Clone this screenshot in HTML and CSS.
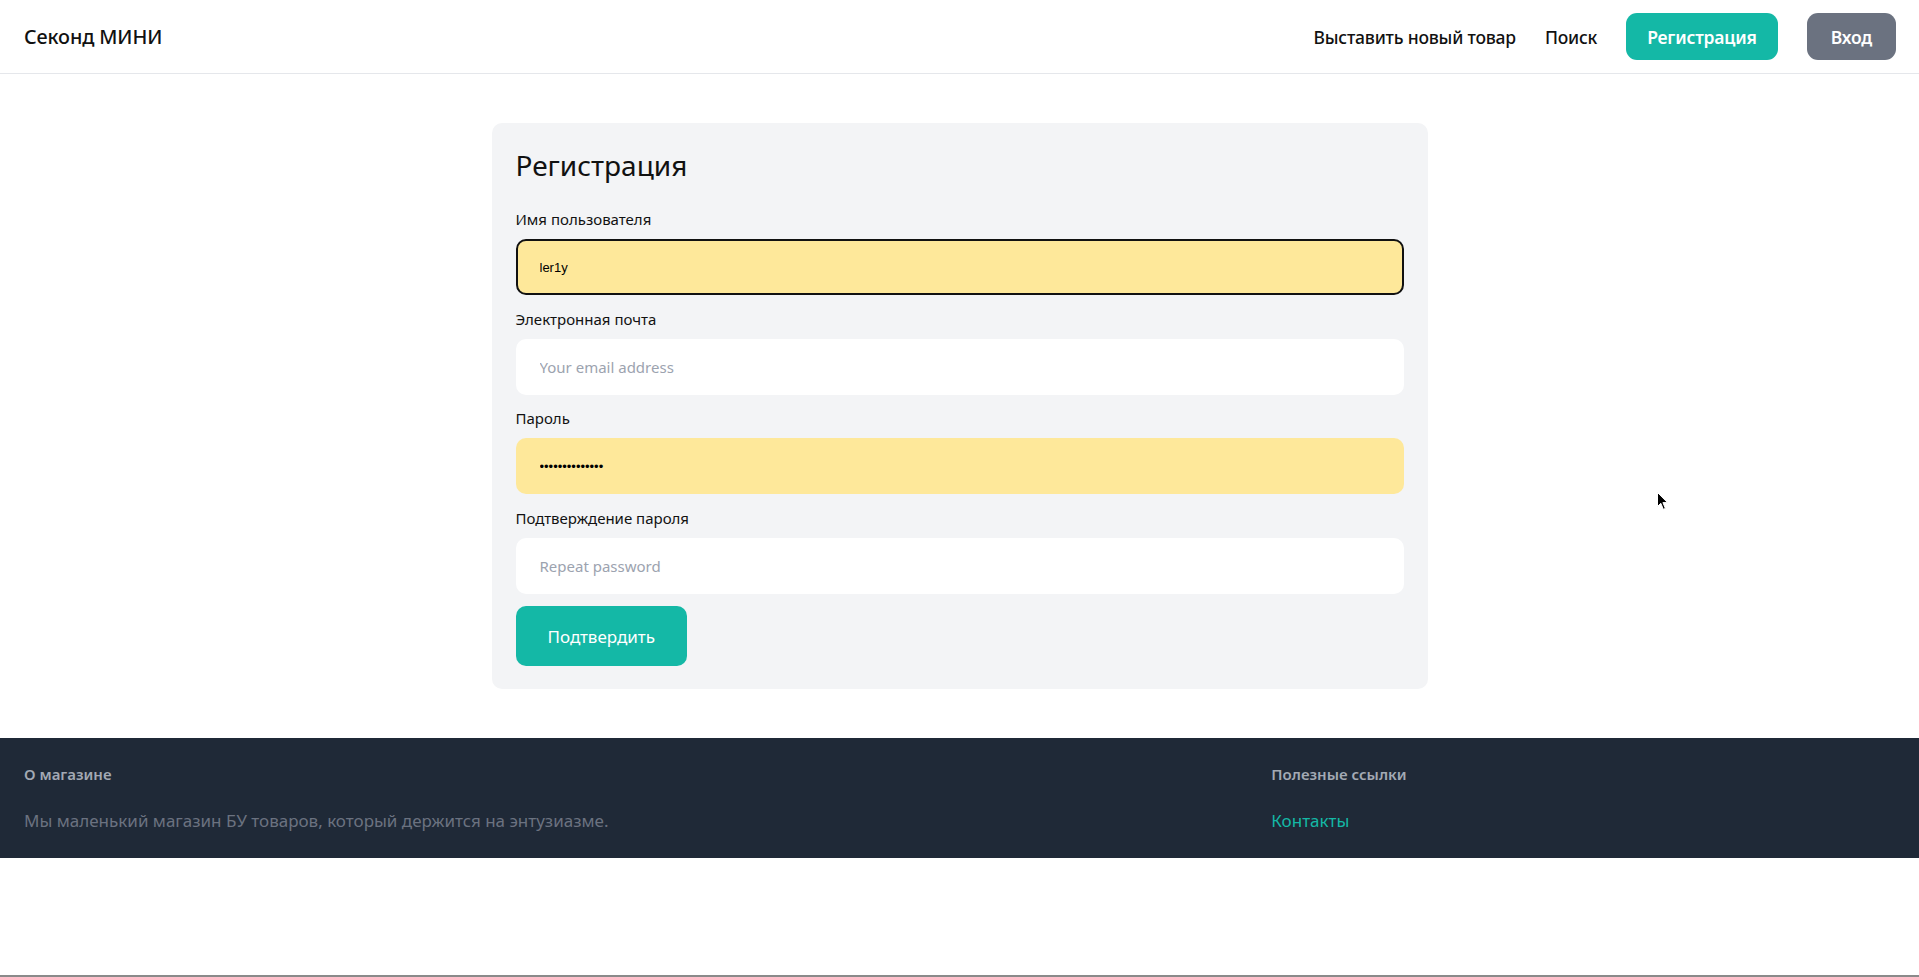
FILE: index.html
```html
<!DOCTYPE html>
<html lang="ru">
<head>
<meta charset="utf-8">
<title>Регистрация — Секонд МИНИ</title>
<link rel="stylesheet" href="styles.css">
</head>
<body>
<div class="page">
  <header class="navbar">
    <a class="brand" href="#">Секонд МИНИ</a>
    <nav class="nav">
      <a class="nav-link" href="#">Выставить новый товар</a>
      <a class="nav-link" href="#">Поиск</a>
      <a class="btn btn-teal" href="#">Регистрация</a>
      <a class="btn btn-gray" href="#">Вход</a>
    </nav>
  </header>

  <main class="main">
    <section class="card">
      <h1 class="card-title">Регистрация</h1>
      <form class="form">
        <div class="field">
          <label class="label" for="username">Имя пользователя</label>
          <input class="input input-autofill input-focus" id="username" type="text" value="ler1y">
        </div>
        <div class="field">
          <label class="label" for="email">Электронная почта</label>
          <input class="input" id="email" type="email" placeholder="Your email address">
        </div>
        <div class="field">
          <label class="label" for="password">Пароль</label>
          <input class="input input-autofill" id="password" type="password" value="11111111111111">
        </div>
        <div class="field">
          <label class="label" for="password2">Подтверждение пароля</label>
          <input class="input" id="password2" type="password" placeholder="Repeat password">
        </div>
        <button class="submit" type="button">Подтвердить</button>
      </form>
    </section>
  </main>

  <footer class="footer">
    <div class="footer-col">
      <h3 class="footer-title">О магазине</h3>
      <p class="footer-text">Мы маленький магазин БУ товаров, который держится на энтузиазме.</p>
    </div>
    <div class="footer-col">
      <h3 class="footer-title">Полезные ссылки</h3>
      <a class="footer-link" href="#">Контакты</a>
    </div>
  </footer>

  <svg class="cursor" width="12" height="19" viewBox="0 0 12 19" aria-hidden="true">
    <path d="M0.5 0.5 L0.5 14.5 L3.8 11.3 L6.3 17.3 L8.4 16.4 L5.9 10.6 L10.5 10.6 Z" fill="#000" stroke="#fff" stroke-width="1"/>
  </svg>
</div>
</body>
</html>
```

FILE: styles.css
```css
* {
  box-sizing: border-box;
}

html, body {
  margin: 0;
  padding: 0;
  background: #ffffff;
}

body {
  font-family: "Noto Sans", "Open Sans", "Liberation Sans", sans-serif;
  color: #111111;
}

a {
  text-decoration: none;
  color: inherit;
}

.page {
  position: relative;
  min-height: 100vh;
  border-bottom: 2px solid #8a8a8a;
  display: flex;
  flex-direction: column;
}

/* Navbar */
.navbar {
  height: 74px;
  border-bottom: 1px solid #e5e7eb;
  display: flex;
  align-items: center;
  justify-content: space-between;
  padding: 0 23px 0 24px;
}

.brand {
  font-size: 19.8px;
  font-weight: 500;
  color: #111111;
  letter-spacing: -0.1px;
}

.nav {
  display: flex;
  align-items: center;
  gap: 29px;
}

.nav-link {
  font-size: 17.5px;
  font-weight: 500;
  color: #111111;
  letter-spacing: -0.2px;
}

.btn {
  display: inline-flex;
  align-items: center;
  justify-content: center;
  height: 47px;
  padding: 0 21px;
  border-radius: 11px;
  color: #ffffff;
  font-size: 17.5px;
  font-weight: 600;
  letter-spacing: -0.2px;
}

.btn-teal {
  background: #14b8a6;
}

.btn-gray {
  background: #6b7280;
  padding: 0 24px;
}

/* Main card */
.main {
  padding: 49px 0 49px;
  display: flex;
  justify-content: center;
}

.card {
  width: 936px;
  background: #f3f4f6;
  border-radius: 10px;
  padding: 24px 24px 23px;
}

.card-title {
  margin: 0 0 24px;
  font-size: 28px;
  line-height: 36px;
  font-weight: 400;
  color: #111111;
}

.form {
  display: flex;
  flex-direction: column;
  gap: 12px;
}

.field {
  display: flex;
  flex-direction: column;
  gap: 8px;
}

.field:nth-child(n+2) {
  margin-top: -0.3px;
}

.label {
  font-size: 15px;
  line-height: 24px;
  color: #111111;
}

.input {
  display: block;
  width: 100%;
  height: 56px;
  border: 2px solid transparent;
  border-radius: 10px;
  background: #ffffff;
  padding: 0 22px;
  font-family: "Noto Sans", "Open Sans", sans-serif;
  font-size: 15px;
  color: #111111;
  outline: none;
}

.input::placeholder {
  color: #9ca3af;
}

.input-autofill {
  background: #fee89a;
  font-family: "Liberation Sans", Arial, sans-serif;
  font-size: 13px;
  color: #000000;
}

.input-focus {
  border-color: #111111;
}

.submit {
  align-self: flex-start;
  height: 60px;
  padding: 0 32px;
  border: none;
  border-radius: 10px;
  background: #14b8a6;
  color: #ffffff;
  font-family: "Noto Sans", "Open Sans", sans-serif;
  font-size: 17px;
  font-weight: 400;
  cursor: pointer;
}

/* Footer */
.footer {
  background: #1f2937;
  display: grid;
  grid-template-columns: 2fr 1fr;
  padding: 24px 24px 23px;
}

.footer-title {
  margin: 0 0 21px;
  font-size: 15px;
  line-height: 24px;
  font-weight: 600;
  color: #a3a9b4;
}

.footer-text {
  margin: 0;
  font-size: 17px;
  line-height: 28px;
  color: #6b7280;
}

.footer-link {
  display: block;
  font-size: 17px;
  line-height: 28px;
  color: #14b8a6;
}

.cursor {
  position: absolute;
  left: 1657px;
  top: 492px;
}
```
